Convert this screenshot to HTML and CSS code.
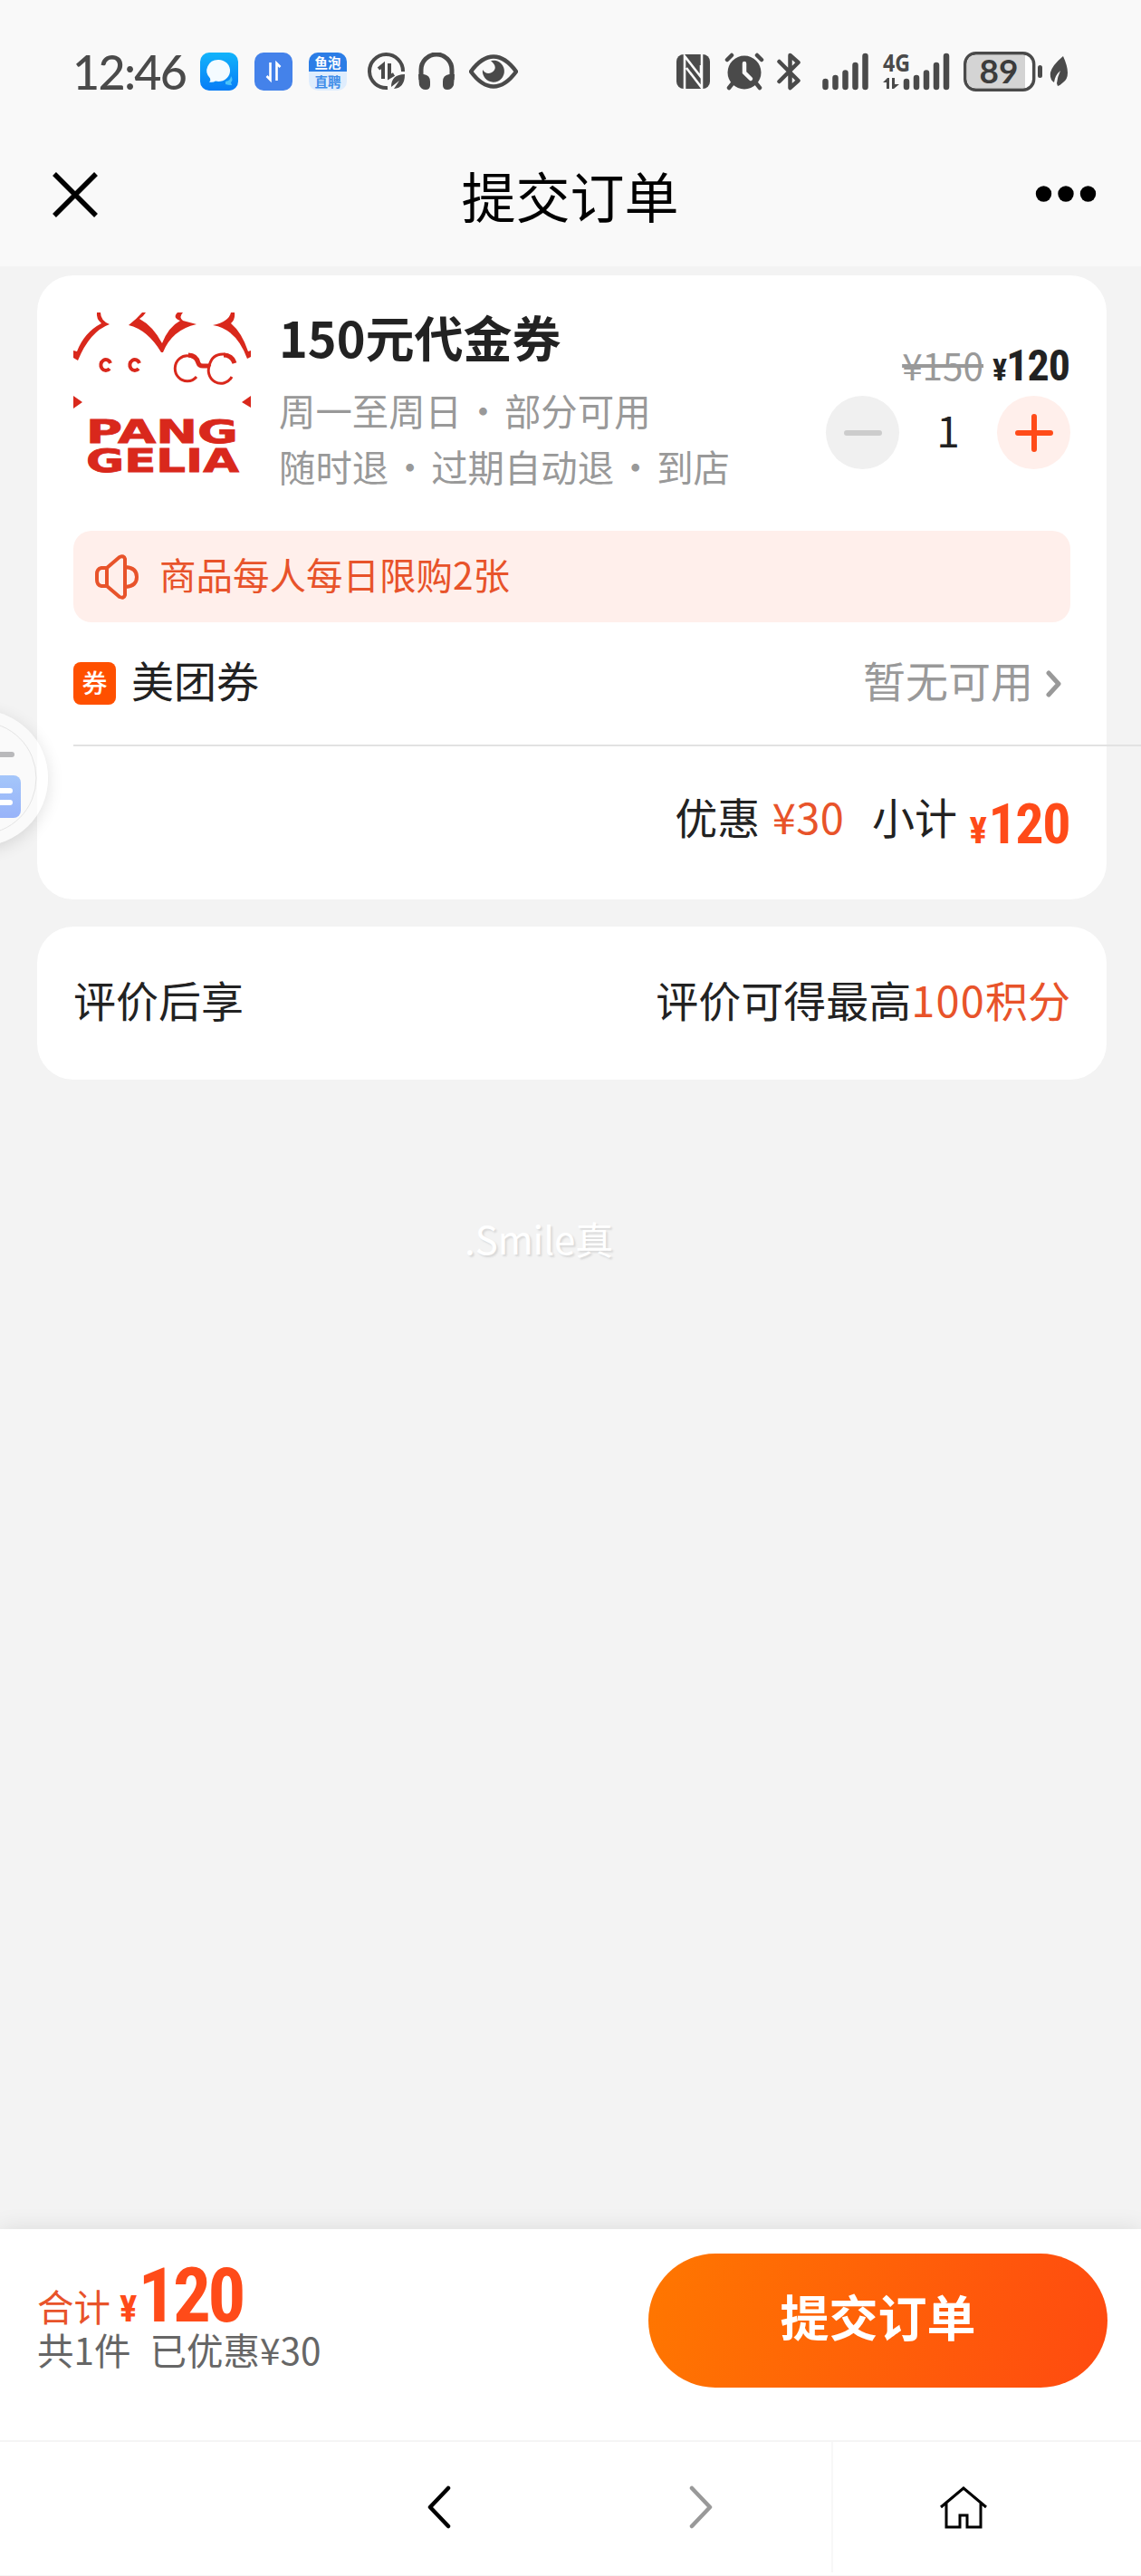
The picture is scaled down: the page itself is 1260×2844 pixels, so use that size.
FILE: index.html
```html
<!DOCTYPE html>
<html lang="zh-CN">
<head>
    <meta charset="UTF-8">
    <meta name="viewport" content="width=device-width, initial-scale=1.0">
    <title>提交订单</title>
    <link rel="stylesheet" href="styles.css">
</head>
<body>
    <header class="top">
        <div class="status-bar">
            <span class="time">12:46</span>
            <svg class="app-icon" width="42" height="42" viewBox="0 0 42 42">
                <defs>
                    <linearGradient id="chatBg" x1="0" y1="0" x2="0" y2="1"><stop offset="0" stop-color="#12b4fb"/><stop offset="1" stop-color="#087cf6"/></linearGradient>
                </defs>
                <rect width="42" height="42" rx="10" fill="url(#chatBg)"/>
                <path d="M28 32q6-1 6-6q3 4 0 7l1 3q-4 0-7-1z" fill="#4cc3fa"/>
                <path d="M20 8a12.500 12 0 1 1-3 23.500q-3 2-7 1q2-2 1-4A12.500 12 0 0 1 20 8z" fill="#f4fbff"/>
            </svg>
            <svg class="app-icon" width="42" height="42" viewBox="0 0 42 42">
                <rect width="42" height="42" rx="10" fill="#4482ea"/>
                <path d="M17.500 11v19l-4-4M24.500 31V12l4 4" fill="none" stroke="#fff" stroke-width="2.600"/>
            </svg>
            <span class="app-icon yupao"><b>鱼泡</b><i>直聘</i></span>
            <svg class="icon-data" width="42" height="42" viewBox="0 0 42 42">
                <path d="M22 39A18.500 18.500 0 1 1 39 21" fill="none" stroke="#4a4a4a" stroke-width="4"/>
                <path d="M17 29V14l-5 4M24 12v15l5-3" fill="none" stroke="#4a4a4a" stroke-width="4"/>
                <path d="M26 38q0-14 15-14q0 15-12 16l6-9z" fill="#4a4a4a"/>
            </svg>
            <svg class="icon-phone" width="40" height="42" viewBox="0 0 40 42">
                <path d="M3 30V19a17 17 0 0 1 34 0v11" fill="none" stroke="#4a4a4a" stroke-width="5"/>
                <path d="M0 24h6q7 1 7 8v4q0 5-5 5t-7-5zM40 24h-6q-7 1-7 8v4q0 5 5 5t7-5z" fill="#4a4a4a"/>
            </svg>
            <svg class="icon-eye" width="54" height="38" viewBox="0 0 54 38">
                <path d="M2 19Q14 2.500 27 2.500T52 19Q40 35.500 27 35.500T2 19z" fill="none" stroke="#4a4a4a" stroke-width="4.500"/>
                <path d="M24 7q9 8 1 13q-6 3-10-3a12 12 0 1 0 9-10z" fill="#4a4a4a"/>
            </svg>
            <span class="spacer"></span>
            <svg width="38" height="38" viewBox="0 0 38 38">
                <rect width="37" height="38" rx="8" fill="#4a4a4a"/>
                <path d="M9 38V2l18 23V12M11 15l17 22V0" fill="none" stroke="#f9f9f9" stroke-width="2.600"/>
            </svg>
            <svg class="icon-alarm" width="44" height="42" viewBox="0 0 44 42">
                <circle cx="22" cy="22" r="18.500" fill="#4a4a4a"/>
                <path d="M3 8l5-5M41 8l-5-5M9 34l-4 5M35 34l4 5" stroke="#4a4a4a" stroke-width="4.500" stroke-linecap="round"/>
                <path d="M22 12v10l7 7" fill="none" stroke="#f9f9f9" stroke-width="4.500" stroke-linecap="round"/>
            </svg>
            <svg class="icon-bt" width="27" height="42" viewBox="0 0 27 42">
                <path d="M2.500 10l21 21l-9 8V3l9 8L2.500 32" fill="none" stroke="#4a4a4a" stroke-width="4.500" stroke-linecap="round" stroke-linejoin="round"/>
            </svg>
            <svg class="icon-signal" width="52" height="42" viewBox="0 0 52 42">
                <path d="M3.500 32v6M14.500 28v10M25.500 22.500V38M36.500 14v24M47.500 4v34" stroke="#4a4a4a" stroke-width="6.500" stroke-linecap="round"/>
            </svg>
            <svg class="icon-4g" width="75" height="42" viewBox="0 0 75 42">
                <text x="0" y="20.500" class="net" textLength="30" lengthAdjust="spacingAndGlyphs">4G</text>
                <path d="M0 33l5-5h2v12H4v-7zM10 28h3v7h5l-6 5h-2z" fill="#4a4a4a"/>
                <path d="M26 32v6M37 28v10M48 22.500V38M59 14v24M70 4v34" stroke="#4a4a4a" stroke-width="6.500" stroke-linecap="round"/>
            </svg>
            <svg class="icon-battery" width="88" height="44" viewBox="0 0 88 44">
                <rect x="1.700" y="1.700" width="76" height="40.600" rx="12" fill="#fff" stroke="#4a4a4a" stroke-width="3.400"/>
                <path d="M13 4h55v36H13q-9 0-9-9V13q0-9 9-9z" fill="#d4d4d4"/>
                <rect x="82" y="15" width="5" height="14" rx="2.500" fill="#4a4a4a"/>
                <text x="39" y="35" text-anchor="middle" class="level">89</text>
            </svg>
            <svg class="icon-leaf" width="22" height="34" viewBox="0 0 22 34">
                <path d="M15 0q10 22 0 29q-3 3-6 4l-1-3q1-8 4-14q-6 5-7 13q-5-3-4-11q2-8 14-18z" fill="#4a4a4a"/>
            </svg>
        </div>
        <div class="title-bar">
            <svg class="close" width="50" height="50" viewBox="0 0 50 50">
                <path d="M2 2l46 46M48 2L2 48" stroke="#000" stroke-width="5.500"/>
            </svg>
            <h1>提交订单</h1>
            <svg class="more" width="68" height="20" viewBox="0 0 68 20">
                <circle cx="9.500" cy="9" r="8.700"/><circle cx="34" cy="9" r="8.700"/><circle cx="58.500" cy="9" r="8.700"/>
            </svg>
        </div>
    </header>

    <main class="content">
        <section class="card order">
            <div class="product">
                <svg class="logo" width="196" height="196" viewBox="0 0 196 196">
                    <g fill="#d9281c">
                        <path d="M26 0h4q0 9 10 13Q18 21 5 53L0 50V42l4 1Q12 22 31 12Q25 7 26 0z"/>
                        <path d="M76 0h4q-3 5-7 7Q88 15 98 34Q105 16 118 9Q109 6 115 0h6q-5 5 0 9l15 4Q109 19 99 44h-2Q82 19 61 14Q70 7 76 0z"/>
                        <path d="M174 0h4q1 8-4 12Q186 22 193 43l3-1v7l-4 2Q180 18 154 14Q172 10 174 0z"/>
                        <path d="M0 92l10 7l-10 7zM196 92l-10 7l10 6z"/>
                    </g>
                    <g fill="none" stroke="#d9281c">
                        <path d="M41 56a5.500 6 0 1 0-1 6M73 56a5.500 6 0 1 0-1 6" stroke-width="4"/>
                        <path d="M136 71a13.500 14 0 1 1 1-17q2 5 4 5h9q3-13 15-13q9 0 13 9M175 71a13.500 14 0 0 1-24-14" stroke-width="3"/>
                        <path d="M127 47q9 0 11 9q1 3 5 3h7M166 47q9 0 12 9" stroke-width="5"/>
                    </g>
                    <text x="14" y="144" textLength="168" lengthAdjust="spacingAndGlyphs">PANG</text>
                    <text x="14" y="176" textLength="169" lengthAdjust="spacingAndGlyphs">GELIA</text>
                </svg>
                <div class="info">
                    <h2>150元代金券</h2>
                    <p>周一至周日<span class="sep">·</span>部分可用</p>
                    <p>随时退<span class="sep">·</span>过期自动退<span class="sep">·</span>到店</p>
                </div>
                <div class="buy">
                    <div class="price">
                        <del>¥150</del>
                        <span class="money"><small>¥</small>120</span>
                    </div>
                    <div class="stepper">
                        <button class="minus"><svg width="42" height="42" viewBox="0 0 42 42"><path d="M3 21h36"/></svg></button>
                        <span class="count">1</span>
                        <button class="plus"><svg width="42" height="42" viewBox="0 0 42 42"><path d="M3 21h36M21 3v36"/></svg></button>
                    </div>
                </div>
            </div>

            <div class="notice">
                <svg width="50" height="50" viewBox="0 0 50 50">
                    <path d="M14 15L28 3q5-2 6 2v40q-1 4-6 2L14 35zM14 15H8q-5 1-5 7v6q0 6 5 7h6M35 14q12 1 12 11T35 36" fill="none" stroke="#e8532a" stroke-width="4" stroke-linejoin="round"/>
                </svg>
                <span>商品每人每日限购2张</span>
            </div>

            <div class="coupon">
                <span class="coupon-tag">券</span>
                <span class="coupon-name">美团券</span>
                <span class="coupon-state">暂无可用</span>
                <svg width="18" height="30" viewBox="0 0 18 30">
                    <path d="M3 3l11 12L3 27" fill="none" stroke="#999" stroke-width="5" stroke-linecap="round" stroke-linejoin="round"/>
                </svg>
            </div>
            <div class="line"></div>

            <div class="subtotal">
                <span>优惠</span>
                <span class="orange off">¥30</span>
                <span class="sub-label">小计</span>
                <span class="money"><small>¥</small>120</span>
            </div>
        </section>

        <section class="card review">
            <span>评价后享</span>
            <span>评价可得最高<em class="orange"><span class="points">100</span>积分</em></span>
        </section>

        <p class="watermark">.Smile真</p>
    </main>

    <footer class="pay">
        <div class="total">
            <div class="total-price">合计<span class="money"><small>¥</small>120</span></div>
            <div class="total-note"><span>共1件</span><span>已优惠¥30</span></div>
        </div>
        <button class="submit">提交订单</button>
    </footer>

    <nav class="browser-nav">
        <svg class="back" width="26" height="48" viewBox="0 0 26 48"><path d="M23 3L3 24l20 21" stroke="#000"/></svg>
        <svg class="forward" width="26" height="48" viewBox="0 0 26 48"><path d="M3 3l20 21L3 45" stroke="#999"/></svg>
        <div class="home">
            <svg width="54" height="48" viewBox="0 0 54 48"><path d="M2 24L27 3l25 21M8 20v26h15V33h8v13h15V20" fill="none" stroke="#000" stroke-width="3"/></svg>
        </div>
    </nav>

    <div class="float-ball">
        <svg width="54" height="150" viewBox="0 0 54 150">
            <defs>
                <linearGradient id="doc" x1="0" y1="0" x2="0" y2="1"><stop offset="0" stop-color="#a4c6fa"/><stop offset="1" stop-color="#98b3f9"/></linearGradient>
            </defs>
            <circle cx="-22" cy="75" r="62" fill="#fafafa" stroke="#e4e4e4"/>
            <path d="M-5 49h18" stroke="#b9b9bb" stroke-width="6" stroke-linecap="round"/>
            <rect x="-20" y="72" width="43" height="47" rx="8" fill="url(#doc)"/>
            <path d="M-5 89h16M-5 102h16" stroke="#fff" stroke-width="6" stroke-linecap="round"/>
        </svg>
    </div>
</body>
</html>
```

FILE: styles.css
```css
* {
    box-sizing: border-box;
}
body {
    margin: 0;
    width: 1260px;
    height: 2844px;
    display: flex;
    flex-direction: column;
    position: relative;
    overflow: hidden;
    background: #f3f3f3;
    color: #222;
    font-family: "Noto Sans CJK SC", sans-serif;
    font-size: 47px;
}
h1, h2, p {
    margin: 0;
}
svg {
    display: block;
    flex: none;
}
button {
    border: none;
    padding: 0;
    font-family: inherit;
}
em {
    font-style: normal;
}
.orange {
    color: #e8532a;
}

/* status bar + title */
.top {
    height: 294px;
    background: #f9f9f9;
}
.status-bar {
    display: flex;
    align-items: center;
    height: 158px;
    padding: 0 79px 0 80px;
}
.time {
    width: 141px;
    font-family: Lato, sans-serif;
    font-size: 52px;
    font-weight: 500;
    line-height: 60px;
    letter-spacing: -1.7px;
    color: #4a4a4a;
}
.app-icon {
    margin-right: 18px;
}
.yupao {
    display: flex;
    flex-direction: column;
    width: 42px;
    height: 42px;
    margin-right: 23px;
    border-radius: 10px;
    overflow: hidden;
    background: #dfedfd;
    font-size: 14.5px;
    line-height: 21px;
    text-align: center;
}
.yupao b {
    background: #2b7de6;
    color: #fff;
}
.yupao i {
    font-style: normal;
    font-weight: bold;
    color: #3f8ce8;
}
.icon-data {
    margin-right: 14px;
}
.icon-phone {
    margin-right: 16px;
}
.spacer {
    flex: 1;
}
.icon-alarm {
    margin-left: 15px;
}
.icon-bt {
    margin-left: 14px;
}
.icon-signal {
    margin-left: 23px;
}
.icon-4g {
    margin-left: 15px;
    overflow: visible;
}
.icon-battery {
    margin-left: 14px;
    overflow: visible;
}
.icon-leaf {
    margin-left: 7px;
}
.net {
    font: bold 27px "Open Sans", sans-serif;
    fill: #4a4a4a;
}
.level {
    font: 700 37px Lato, sans-serif;
    fill: #3c3c3c;
}
.title-bar {
    display: flex;
    align-items: center;
    justify-content: space-between;
    height: 114px;
    padding: 0 49px 0 58px;
}
.title-bar h1 {
    padding-left: 8px;
    font-size: 60px;
    font-weight: 400;
    line-height: 80px;
    color: #000;
}

/* cards */
.content {
    flex: 1;
    padding: 10px 38px 0 41px;
}
.card {
    padding: 0 40px;
    border-radius: 40px;
    background: #fff;
}
.product {
    display: flex;
    height: 282px;
    padding-top: 41px;
}
.logo text {
    font: bold 35px "DejaVu Sans", sans-serif;
    fill: #d9281c;
    stroke: #d9281c;
    stroke-width: 0.8px;
}
.info {
    flex: 1;
    margin: -3px 0 0 31px;
    white-space: nowrap;
}
.info h2 {
    margin-bottom: 20px;
    font-size: 54px;
    font-weight: 700;
    line-height: 60px;
}
.info p {
    font-size: 40.4px;
    line-height: 61.5px;
    color: #999;
}
.sep {
    display: inline-block;
    width: 47px;
    text-align: center;
}
.buy {
    width: 270px;
    padding-top: 28px;
}
.price {
    display: flex;
    align-items: baseline;
    justify-content: flex-end;
    height: 64px;
    padding-right: 1px;
    line-height: 60px;
}
.price del {
    margin-right: 10px;
    font-size: 40.5px;
    color: #999;
}
.money {
    font-family: Roboto, sans-serif;
    font-size: 48px;
    font-weight: 700;
    font-stretch: 77%;
    letter-spacing: -1px;
}
.money small {
    font-size: 34px;
}
.stepper {
    display: flex;
    align-items: center;
    justify-content: space-between;
}
.stepper button {
    display: flex;
    align-items: center;
    justify-content: center;
    width: 81px;
    height: 81px;
    border-radius: 50%;
}
.stepper path {
    fill: none;
    stroke: currentColor;
    stroke-width: 6px;
    stroke-linecap: round;
}
.minus {
    background: #f0f0f0;
    color: #ccc;
}
.plus {
    background: #ffefeb;
    color: #ff4b19;
}
.count {
    padding-bottom: 7px;
    font-size: 46px;
    line-height: 60px;
}
.notice {
    display: flex;
    align-items: center;
    gap: 22px;
    height: 101px;
    padding-left: 23px;
    border-radius: 20px;
    background: #ffefeb;
    color: #e8532a;
    font-size: 40.5px;
    line-height: 60px;
}
.notice span {
    padding-bottom: 6px;
}
.coupon {
    display: flex;
    align-items: center;
    height: 135px;
    padding-right: 9px;
    line-height: 60px;
}
.coupon-tag {
    width: 47px;
    height: 47px;
    border-radius: 8px;
    background: #ff5000;
    color: #fff;
    font-size: 28px;
    font-weight: 500;
    line-height: 45px;
    text-align: center;
}
.coupon-name {
    flex: 1;
    margin-left: 17px;
    padding-bottom: 10px;
}
.coupon-state {
    margin-right: 14px;
    padding-bottom: 10px;
    color: #999;
}
.line {
    height: 2px;
    margin-right: -78px;
    background: #e2e2e2;
}
.subtotal {
    height: 169px;
    padding: 42px 1px 0 0;
    line-height: 70px;
    text-align: right;
    white-space: nowrap;
}
.off {
    margin: 0 20px 0 3px;
    letter-spacing: 0.5px;
}
.subtotal .money {
    margin-left: 3px;
    font-size: 62px;
    line-height: 50px;
    letter-spacing: -1.5px;
    vertical-align: -10px;
    color: #ff4b19;
}
.subtotal .money small {
    margin-right: 3px;
    font-size: 41px;
}
.review {
    display: flex;
    align-items: center;
    justify-content: space-between;
    height: 169px;
    margin-top: 30px;
    padding-bottom: 11px;
}
.points {
    letter-spacing: 1.2px;
}
.watermark {
    margin: 145px 0 0 472px;
    font-size: 42px;
    line-height: 60px;
    color: #fff;
    text-shadow: 2px 2px 2px #d8d8d8;
}

/* bottom bars */
.pay {
    display: flex;
    justify-content: space-between;
    height: 233px;
    padding: 27px 37px 0 41px;
    background: #fff;
    box-shadow: 0 0 24px rgba(0, 0, 0, 0.1);
}
.total-price {
    height: 81px;
    padding-top: 7px;
    color: #e8532a;
    font-size: 40.5px;
    line-height: 80px;
    white-space: nowrap;
}
.total-price .money {
    margin-left: 10px;
    color: #ff4b19;
    font-size: 83px;
    letter-spacing: -3.5px;
}
.total-price .money small {
    margin-right: 1px;
    font-size: 41px;
    letter-spacing: 0;
}
.total-note {
    display: flex;
    gap: 21px;
    color: #666;
    font-size: 40.5px;
    line-height: 50px;
}
.submit {
    width: 507px;
    height: 148px;
    padding-bottom: 12px;
    border-radius: 74px;
    background: linear-gradient(105deg, #ff7700, #ff4a10);
    color: #fff;
    font-size: 54px;
    font-weight: 700;
}
.browser-nav {
    display: flex;
    align-items: center;
    height: 150px;
    padding-bottom: 3px;
    border-top: 2px solid #f5f5f5;
    border-bottom: 1px solid #f5f5f5;
    background: #fff;
    position: relative;
}
.back, .forward {
    fill: none;
    stroke-width: 4.5px;
    stroke-linecap: round;
    stroke-linejoin: round;
}
.back {
    margin-left: 472px;
}
.forward {
    margin-left: 263px;
}
.home {
    display: flex;
    align-items: center;
    flex: 1;
    height: 100%;
    margin-left: 131px;
    padding-left: 117px;
    border-left: 2px solid #f7f7f7;
}

/* assistant bubble docked over the left edge */
.float-ball {
    position: absolute;
    left: -97px;
    top: 784px;
    width: 150px;
    height: 150px;
    padding-left: 97px;
    border-radius: 50%;
    background: rgba(255, 255, 255, 0.6);
    box-shadow: 0 4px 18px rgba(0, 0, 0, 0.12);
}
```
